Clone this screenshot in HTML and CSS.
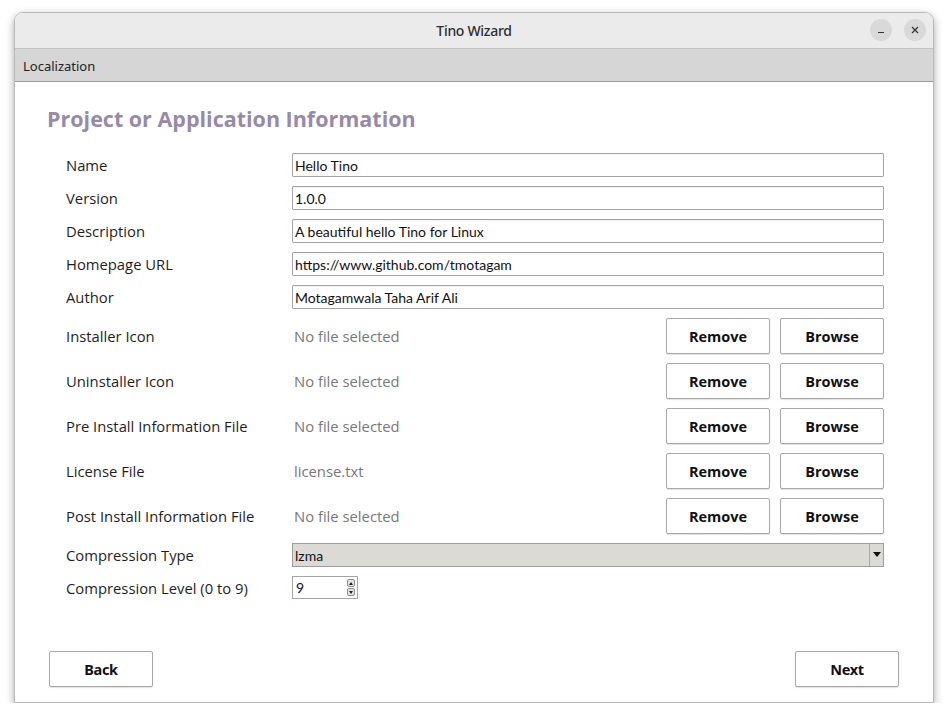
FILE: index.html
```html
<!DOCTYPE html>
<html lang="en">
<head>
    <meta charset="UTF-8">
    <title>Tino Wizard</title>
    <link rel="stylesheet" href="styles.css">
</head>
<body>
    <div class="window">
        <!-- Title bar -->
        <div class="titlebar">
            <span class="title">Tino Wizard</span>
            <div class="win-controls">
                <span class="win-btn">
                    <svg width="10" height="10" viewBox="0 0 10 10"><path d="M2 7.5h6" stroke="#333" stroke-width="1.2"/></svg>
                </span>
                <span class="win-btn">
                    <svg width="10" height="10" viewBox="0 0 10 10"><path d="M2 2l6 6M8 2l-6 6" stroke="#333" stroke-width="1.2"/></svg>
                </span>
            </div>
        </div>

        <!-- Menu bar -->
        <div class="menubar">
            <span class="menu-item">Localization</span>
        </div>

        <!-- Main Content -->
        <div class="content">
            <h1 class="section-title">Project or Application Information</h1>

            <div class="form-grid">
                <label>Name</label>
                <input class="text-field" type="text" value="Hello Tino">

                <label>Version</label>
                <input class="text-field" type="text" value="1.0.0">

                <label>Description</label>
                <input class="text-field" type="text" value="A beautiful hello Tino for Linux">

                <label>Homepage URL</label>
                <input class="text-field" type="text" value="https://www.github.com/tmotagam">

                <label>Author</label>
                <input class="text-field" type="text" value="Motagamwala Taha Arif Ali">

                <label>Installer Icon</label>
                <div class="file-row">
                    <span class="file-name">No file selected</span>
                    <button class="btn">Remove</button>
                    <button class="btn">Browse</button>
                </div>

                <label>Uninstaller Icon</label>
                <div class="file-row">
                    <span class="file-name">No file selected</span>
                    <button class="btn">Remove</button>
                    <button class="btn">Browse</button>
                </div>

                <label>Pre Install Information File</label>
                <div class="file-row">
                    <span class="file-name">No file selected</span>
                    <button class="btn">Remove</button>
                    <button class="btn">Browse</button>
                </div>

                <label>License File</label>
                <div class="file-row">
                    <span class="file-name">license.txt</span>
                    <button class="btn">Remove</button>
                    <button class="btn">Browse</button>
                </div>

                <label>Post Install Information File</label>
                <div class="file-row">
                    <span class="file-name">No file selected</span>
                    <button class="btn">Remove</button>
                    <button class="btn">Browse</button>
                </div>

                <label>Compression Type</label>
                <div class="combo">
                    <span class="combo-value">lzma</span>
                    <span class="combo-arrow">
                        <svg width="8" height="6" viewBox="0 0 8 6"><path d="M0 0h8L4 5z" fill="#111"/></svg>
                    </span>
                </div>

                <label>Compression Level (0 to 9)</label>
                <div class="spin">
                    <span class="spin-value">9</span>
                    <span class="spin-buttons">
                        <span class="spin-btn">
                            <svg width="4" height="3" viewBox="0 0 4 3"><path d="M0 3h4L2 0z" fill="#222"/></svg>
                        </span>
                        <span class="spin-btn">
                            <svg width="4" height="3" viewBox="0 0 4 3"><path d="M0 0h4L2 3z" fill="#222"/></svg>
                        </span>
                    </span>
                </div>
            </div>

            <div class="nav-buttons">
                <button class="btn nav-btn">Back</button>
                <button class="btn nav-btn">Next</button>
            </div>
        </div>
    </div>
</body>
</html>
```

FILE: styles.css
```css
body {
    margin: 0;
    padding: 12px 14px 0;
    background: #fff;
    font-family: "Open Sans", "Noto Sans", sans-serif;
    color: #1e1e1e;
}

/* Window frame */
.window {
    width: 920px;
    height: 691px;
    box-sizing: border-box;
    border: 1px solid #b9b9b9;
    border-radius: 9px 9px 0 0;
    background: #fff;
    display: flex;
    flex-direction: column;
    box-shadow: 0 3px 8px rgba(0, 0, 0, 0.35);
    overflow: hidden;
}

/* Title bar */
.titlebar {
    height: 35px;
    flex: none;
    background: #ebebeb;
    display: flex;
    align-items: center;
    justify-content: center;
    position: relative;
}

.title {
    font-family: "Noto Sans", sans-serif;
    font-size: 14px;
    font-weight: 500;
    letter-spacing: -0.3px;
    color: #2e2e2e;
    margin-top: -1px;
}

.win-controls {
    position: absolute;
    right: 7px;
    top: 6px;
    display: flex;
    gap: 12px;
}

.win-btn {
    width: 22px;
    height: 22px;
    border-radius: 50%;
    background: #d9d9d9;
    display: flex;
    align-items: center;
    justify-content: center;
}

/* Menu bar */
.menubar {
    height: 34px;
    flex: none;
    box-sizing: border-box;
    background: #d6d6d6;
    border-top: 1px solid #c4c4c4;
    border-bottom: 1px solid #9a9a9a;
    display: flex;
    align-items: center;
    padding-left: 8px;
}

.menu-item {
    font-family: "Noto Sans", sans-serif;
    font-size: 13px;
    color: #222;
    margin-top: 1px;
}

/* Main Content */
.content {
    flex: 1;
    display: flex;
    flex-direction: column;
    padding: 23px 49px 15px 32px;
}

.section-title {
    margin: 0 0 20px;
    font-size: 21.5px;
    line-height: 28px;
    font-weight: 700;
    color: #978aa9;
}

.form-grid {
    display: grid;
    grid-template-columns: 226px 1fr;
    row-gap: 9px;
    align-items: center;
    margin-left: 19px;
}

.form-grid label {
    font-size: 14.8px;
    color: #1e1e1e;
}

.text-field {
    height: 24px;
    box-sizing: border-box;
    border: 1px solid #a5a5a5;
    border-radius: 1px;
    padding: 0 2px;
    font-family: "Lato", sans-serif;
    font-size: 14px;
    color: #111;
    background: #fff;
    box-shadow: inset 0 1px 1px rgba(0, 0, 0, 0.06);
}

.file-row {
    display: flex;
    align-items: center;
    gap: 10px;
    height: 36px;
}

.file-name {
    flex: 1;
    padding-left: 2px;
    font-size: 14.8px;
    color: #787878;
}

.btn {
    width: 104px;
    height: 36px;
    box-sizing: border-box;
    border: 1px solid #a8a8a8;
    border-radius: 2px;
    background: #fff;
    font-family: "Open Sans", sans-serif;
    font-size: 14.5px;
    font-weight: 700;
    color: #111;
    box-shadow: 0 1px 1px rgba(0, 0, 0, 0.12);
}

/* Combo box */
.combo {
    height: 24px;
    box-sizing: border-box;
    border: 1px solid #9e9e9e;
    background: #dcdad5;
    display: flex;
    align-items: center;
}

.combo-value {
    flex: 1;
    padding-left: 2px;
    font-family: "Lato", sans-serif;
    font-size: 14px;
    color: #111;
}

.combo-arrow {
    width: 13px;
    height: 100%;
    border-left: 1px solid #a9a9a9;
    display: flex;
    align-items: center;
    justify-content: center;
}

/* Spin box */
.spin {
    width: 66px;
    height: 23px;
    box-sizing: border-box;
    border: 1px solid #a5a5a5;
    display: flex;
    align-items: center;
}

.spin-value {
    flex: 1;
    padding-left: 3px;
    font-family: "Lato", sans-serif;
    font-size: 14px;
    color: #111;
}

.spin-buttons {
    display: flex;
    flex-direction: column;
    gap: 1px;
    margin-right: 2px;
}

.spin-btn {
    width: 8px;
    height: 8px;
    box-sizing: border-box;
    border: 1px solid #8e8e8e;
    border-radius: 2px;
    background: #e4e4e4;
    display: flex;
    align-items: center;
    justify-content: center;
}

/* Back / Next */
.nav-buttons {
    margin-top: auto;
    display: flex;
    justify-content: space-between;
    padding: 0 0 0 2px;
    margin-right: -15px;
}

.nav-btn {
    font-family: "Noto Sans", sans-serif;
    font-size: 14.5px;
    letter-spacing: -0.3px;
}
```
